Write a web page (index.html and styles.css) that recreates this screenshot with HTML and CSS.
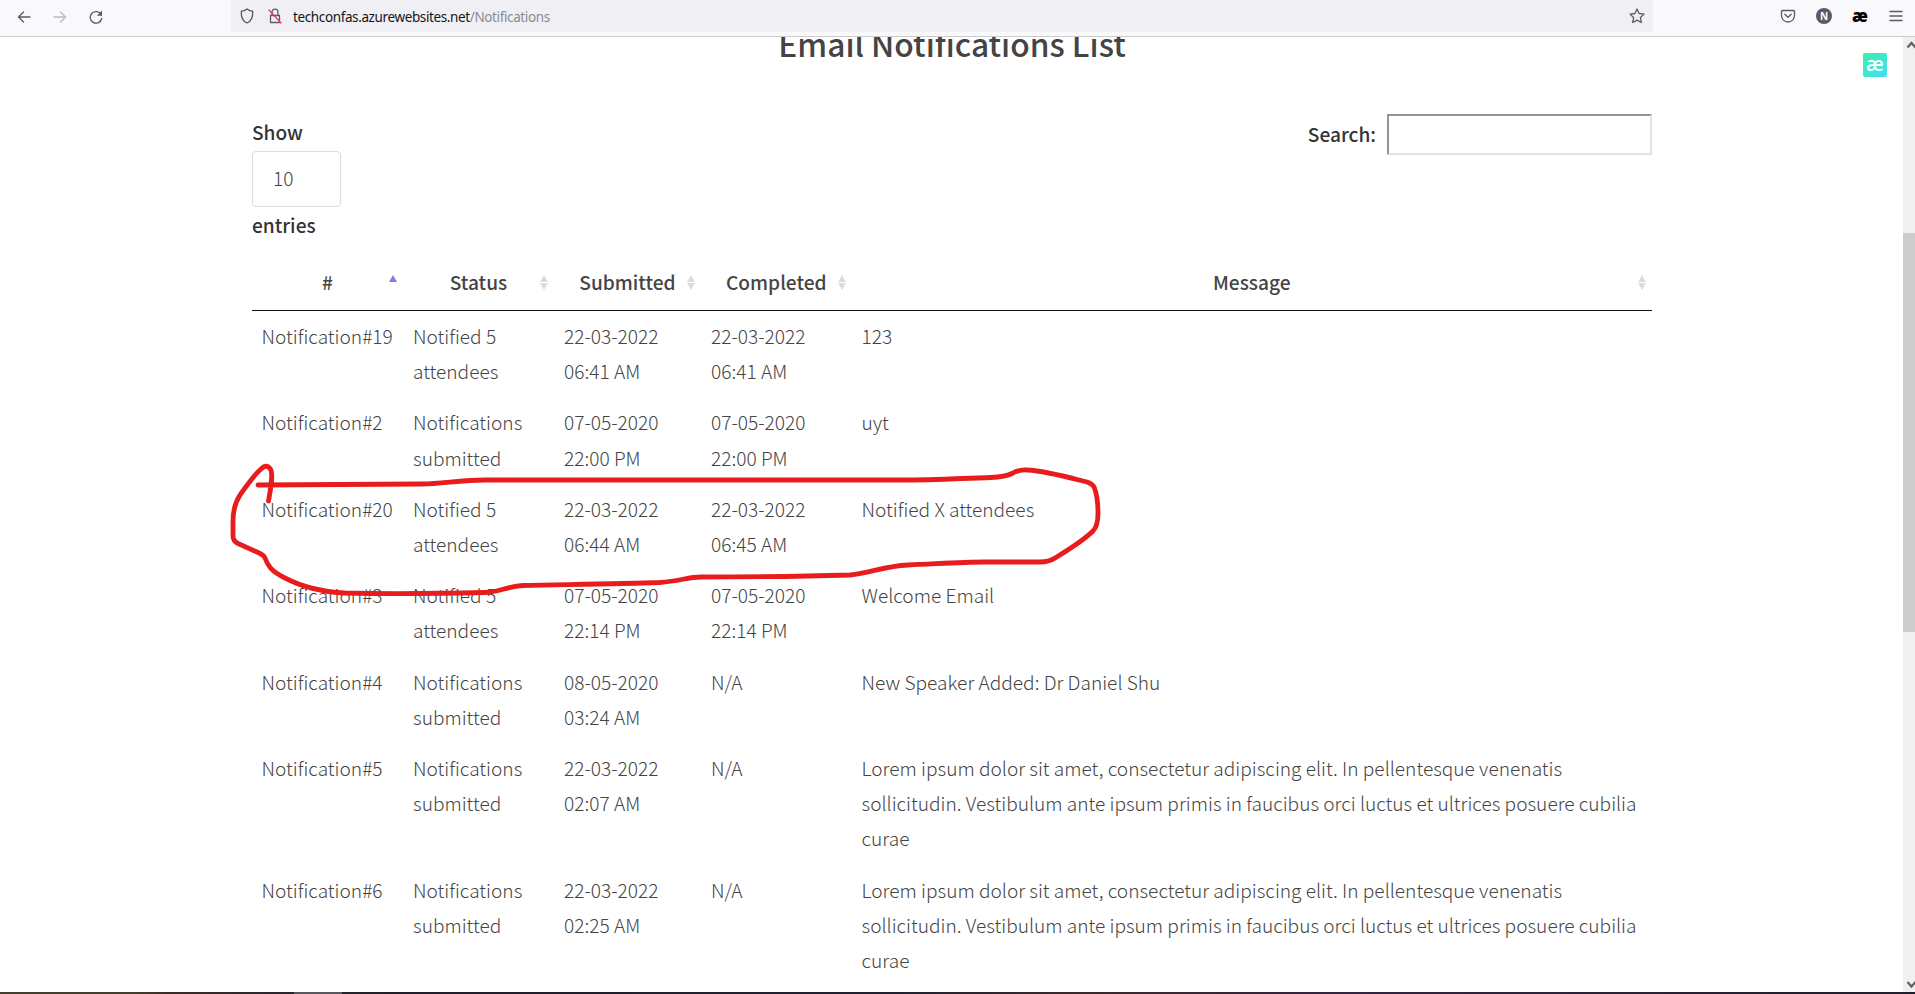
FILE: index.html
```html
<!DOCTYPE html>
<html lang="en">
<head>
<meta charset="utf-8">
<title>Email Notifications List</title>
<link rel="stylesheet" href="styles.css">
</head>
<body>
<header class="toolbar">
  <nav class="nav-buttons">
    <svg class="icon" viewBox="0 0 16 16"><path d="M14 8H2.500M7.500 3 2.500 8l5 5"/></svg>
    <svg class="icon disabled" viewBox="0 0 16 16"><path d="M2 8h11.500M8.500 3l5 5-5 5"/></svg>
    <svg class="icon" viewBox="0 0 16 16"><path d="M13.300 6A5.800 5.800 0 1 0 13.700 9.500"/><path class="solid" d="M14 1.500v5.200H8.800z"/></svg>
  </nav>
  <div class="address">
    <svg class="icon shield" viewBox="0 0 16 16"><path d="M8 .9c1.700 1.500 3.700 2.200 5.700 2.300C14 8 12.500 13 8 15 3.500 13 2 8 2.300 3.200 4.300 3.100 6.300 2.400 8 .9z"/></svg>
    <svg class="icon lock" viewBox="0 0 16 16"><path d="M3.500 7.500h9v7h-9zM5 7V4.200a3 3 0 0 1 6 0V7"/><path class="slash" d="M2 2l12 13"/></svg>
    <span class="url"><b>techconfas.azurewebsites.net</b>/Notifications</span>
    <svg class="icon star" viewBox="0 0 16 16"><path d="M8 1l2.100 4.500 4.900.6-3.600 3.400.9 5L8 12.100l-4.300 2.400.9-5L1 6.100l4.900-.6z"/></svg>
  </div>
  <div class="extensions">
    <svg class="icon" viewBox="0 0 16 16"><path d="M2.500 2.500h11q1 0 1 1V7.500a6.500 6.500 0 0 1-13 0v-4q0-1 1-1zM4.800 6.300 8 9.300l3.200-3"/></svg>
    <span class="profile">N</span>
    <span class="ae">æ</span>
    <svg class="icon" viewBox="0 0 16 16"><path d="M2 3.500h12M2 8h12M2 12.500h12"/></svg>
  </div>
</header>
<div class="viewport">
  <main class="page">
    <h1 class="title">Email Notifications List</h1>
    <div class="controls">
      <div class="length"><span>Show</span><div class="select">10</div><span>entries</span></div>
      <label class="search">Search:<input type="text" class="search-input"></label>
    </div>
    <table class="list">
      <colgroup><col class="c1"><col class="c2"><col class="c3"><col class="c4"><col></colgroup>
      <thead>
        <tr>
          <th class="sorted">#</th><th>Status</th><th>Submitted</th><th>Completed</th><th>Message</th>
        </tr>
      </thead>
      <tbody>
        <tr><td>Notification#19</td><td>Notified 5<br>attendees</td><td>22-03-2022<br>06:41 AM</td><td>22-03-2022<br>06:41 AM</td><td>123</td></tr>
        <tr><td>Notification#2</td><td>Notifications<br>submitted</td><td>07-05-2020<br>22:00 PM</td><td>07-05-2020<br>22:00 PM</td><td>uyt</td></tr>
        <tr><td>Notification#20</td><td>Notified 5<br>attendees</td><td>22-03-2022<br>06:44 AM</td><td>22-03-2022<br>06:45 AM</td><td>Notified X attendees</td></tr>
        <tr><td>Notification#3</td><td>Notified 5<br>attendees</td><td>07-05-2020<br>22:14 PM</td><td>07-05-2020<br>22:14 PM</td><td>Welcome Email</td></tr>
        <tr><td>Notification#4</td><td>Notifications<br>submitted</td><td>08-05-2020<br>03:24 AM</td><td>N/A</td><td>New Speaker Added: Dr Daniel Shu</td></tr>
        <tr><td>Notification#5</td><td>Notifications<br>submitted</td><td>22-03-2022<br>02:07 AM</td><td>N/A</td><td>Lorem ipsum dolor sit amet, consectetur adipiscing elit. In pellentesque venenatis<br>sollicitudin. Vestibulum ante ipsum primis in faucibus orci luctus et ultrices posuere cubilia<br>curae</td></tr>
        <tr><td>Notification#6</td><td>Notifications<br>submitted</td><td>22-03-2022<br>02:25 AM</td><td>N/A</td><td>Lorem ipsum dolor sit amet, consectetur adipiscing elit. In pellentesque venenatis<br>sollicitudin. Vestibulum ante ipsum primis in faucibus orci luctus et ultrices posuere cubilia<br>curae</td></tr>
      </tbody>
    </table>
  </main>
  <aside class="scrollbar">
    <svg class="arrow" viewBox="0 0 12 16"><path d="M4.500 10.500 8.500 6l4 4.500"/></svg>
    <div class="thumb"></div>
    <svg class="arrow" viewBox="0 0 12 16"><path d="M4.500 6l4 4.500L12.500 6"/></svg>
  </aside>
</div>
<footer class="taskbar"><i class="active-app"></i></footer>
<span class="badge">æ</span>
<svg class="marker" viewBox="0 0 1915 994"><path d="M268.500 501C271 487 273 476 271 470Q267 463 261 469C254 475 247 485 240 495Q233 506 233 521V536Q233 541 238 543.500L257 552Q264 555 265 558C268 566 271 571 285 578C304 588 325 592 345 593C390 594 440 593.500 485 592.500C500 592 508 586 523 585.500C570 584.500 620 584 660 582.500C680 581 688 577 701 577C750 577 800 576.500 850 575C870 573 885 566 908 565C935 564 960 562 985 562H1040Q1049 562 1055 558C1068 550 1083 541 1093 531Q1098 526 1098 513C1098 503 1097 495 1094.500 488Q1093 484 1087 482C1067 477 1045 471 1028 470Q1020 469 1013 473Q1005 477 991 477.500C965 478 940 480 900 480H485C460 480 442 484 422 484L258 485"/></svg>
</body>
</html>
```
FILE: styles.css
```css
* { box-sizing: border-box; }
body {
  margin: 0;
  height: 994px;
  overflow: hidden;
  display: flex;
  flex-direction: column;
  background: #fff;
  color: #444;
  font: 300 19.13px/35.2px "Noto Sans CJK SC", sans-serif;
}
.toolbar {
  flex: none;
  height: 37px;
  display: flex;
  align-items: flex-start;
  background: #f9f9fb;
  border-bottom: 1px solid #cccccf;
}
.icon {
  width: 16px;
  height: 16px;
  flex: none;
  fill: none;
  stroke: #5b5b66;
  stroke-width: 1.3;
  stroke-linecap: round;
  stroke-linejoin: round;
}
.icon .solid { fill: #5b5b66; stroke: none; }
.icon .slash { stroke: #f5335b; }
.icon.disabled { stroke: #bbbbc0; }
.nav-buttons {
  width: 231px;
  flex: none;
  display: flex;
  gap: 20px;
  padding: 9px 0 0 16px;
}
.address {
  width: 1422px;
  height: 32px;
  flex: none;
  display: flex;
  align-items: center;
  padding: 0 8px;
  background: #f0f0f4;
  border-radius: 0 0 4px 4px;
}
.lock { margin-left: 12px; }
.url {
  flex: 1;
  margin-left: 10px;
  padding-top: 1px;
  font: 400 13.5px/32px "Noto Sans", sans-serif;
  letter-spacing: -0.38px;
  color: #8b8b90;
}
.url b { font-weight: 400; color: #15141a; }
.extensions {
  flex: 1;
  display: flex;
  align-items: center;
  justify-content: space-between;
  height: 32px;
  padding: 0 11px 0 127px;
}
.profile {
  width: 16px;
  height: 16px;
  border-radius: 50%;
  background: #5b5b66;
  color: #fff;
  font: 700 10px/16px "Open Sans", sans-serif;
  text-align: center;
}
.ae { font: 800 17px/28px "Open Sans", sans-serif; color: #000; width: 16px; display: flex; justify-content: center; }
.viewport { flex: 1; min-height: 0; display: flex; overflow: hidden; }
.page { flex: 1; padding: 0 251px 0 252px; }
.title {
  margin: -24px 0 0;
  height: 60px;
  color: #444;
  font-size: 31.7px;
  font-weight: 500;
  line-height: 60px;
  text-align: center;
  white-space: nowrap;
}
.controls {
  height: 142px;
  margin-top: 41px;
  display: flex;
  justify-content: space-between;
  align-items: flex-start;
  color: #333;
  font-weight: 500;
}
.length { display: flex; flex-direction: column; }
.length span { height: 37px; line-height: 37px; }
.select {
  width: 89px;
  height: 56px;
  padding: 0 20px;
  border: 1px solid #ddd;
  border-radius: 4px;
  font-weight: 300;
  line-height: 52px;
  color: #444;
}
.search { display: flex; gap: 11px; line-height: 40px; }
.search-input { width: 265px; height: 41px; margin: 0; padding: 0; border: 2px solid; border-color: #949494 #e3e3e3 #e3e3e3 #949494; background: #fff; }
.list { width: 1400px; border-collapse: separate; border-spacing: 0; table-layout: fixed; }
.c1, .c2 { width: 151px; }
.c3 { width: 147px; }
.c4 { width: 150.5px; }
th {
  position: relative;
  height: 55px;
  padding: 0 18px;
  border-bottom: 1px solid #111;
  font-weight: 500;
  text-align: center;
}
th::before, th::after {
  content: "";
  position: absolute;
  right: 6px;
  border: 4px solid transparent;
}
th::before { top: 19px; border-bottom: 7px solid #dcdcdc; border-top: 0; }
th::after { top: 27px; border-top: 7px solid #dcdcdc; border-bottom: 0; }
th.sorted::before { border-bottom-color: #7f7fe0; }
th.sorted::after { display: none; }
td { padding: 8px 0 8px 10px; vertical-align: top; white-space: nowrap; }
td:first-child { padding-left: 9.5px; }
.scrollbar {
  width: 12px;
  flex: none;
  background: #f0f0f0;
  display: flex;
  flex-direction: column;
}
.arrow { width: 12px; height: 16px; flex: none; fill: none; stroke: #606060; stroke-width: 2.2; }
.thumb { height: 399px; margin: 180px 0 auto; background: #cdcdcd; }
.taskbar { flex: none; height: 2px; padding-left: 294px; background: linear-gradient(90deg, #42402c 0 130px, #3d2b26 170px, #2b272b 260px, #201f29 400px, #202230 900px, #3b292b 1080px, #30243f 1350px, #20202a); }
.active-app { display: block; width: 48px; height: 2px; background: #59595d; }
.badge {
  position: absolute;
  left: 1863px;
  top: 53px;
  width: 24px;
  height: 24px;
  border-radius: 2px;
  background: linear-gradient(145deg, #3cf0a5, #42def8);
  color: #fff;
  font: 600 20px/21px "Open Sans", sans-serif;
  text-align: center;
}
.marker { position: absolute; left: 0; top: 0; width: 1915px; height: 994px; fill: none; stroke: #e81c1c; stroke-width: 4.8; stroke-linecap: round; stroke-linejoin: round; pointer-events: none; }
```
